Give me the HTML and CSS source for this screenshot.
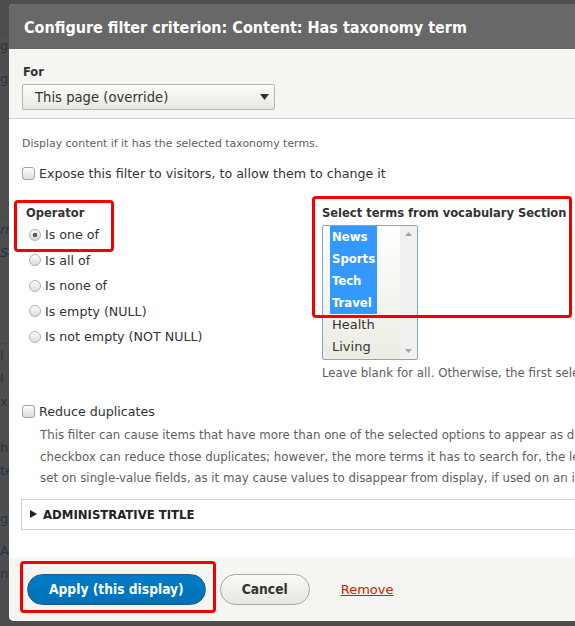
FILE: index.html
```html
<!DOCTYPE html>
<html lang="en">
<head>
<meta charset="utf-8">
<title>Configure filter criterion</title>
<link rel="stylesheet" href="styles.css">
</head>
<body>
<div class="backdrop" aria-hidden="true">
  <div class="bd-space bd-s34"></div>
  <div class="bd-row">ge</div>
  <div class="bd-space bd-s10"></div>
  <div class="bd-row">g</div>
  <div class="bd-space bd-s128"></div>
  <div class="bd-row bd-em">rr</div>
  <div class="bd-row bd-em">Sc</div>
  <div class="bd-space bd-s80"></div>
  <div class="bd-row">l c</div>
  <div class="bd-row">l E</div>
  <div class="bd-row">xt</div>
  <div class="bd-space bd-s23"></div>
  <div class="bd-row">hi</div>
  <div class="bd-row">te</div>
  <div class="bd-space bd-s25"></div>
  <div class="bd-row">g</div>
  <div class="bd-space bd-s9"></div>
  <div class="bd-row">Ar</div>
  <div class="bd-row">nc</div>
</div>

<div class="dialog" role="dialog" aria-labelledby="dlg-title">
  <div class="dialog-title" id="dlg-title">Configure filter criterion: Content: Has taxonomy term</div>

  <div class="override">
    <div class="field-label">For</div>
    <div class="select">
      <span>This page (override)</span>
      <svg class="select-arrow" width="9" height="6" viewBox="0 0 9 6"><path d="M0 0H9L4.5 6Z" fill="#333"/></svg>
    </div>
  </div>

  <div class="dialog-body">
    <p class="desc">Display content if it has the selected taxonomy terms.</p>
    <label class="check-row"><input type="checkbox" class="check"><span>Expose this filter to visitors, to allow them to change it</span></label>

    <div class="columns">
      <div class="col-left">
        <div class="field-label">Operator</div>
        <label class="radio-row"><input type="radio" name="op" class="radio" checked><span>Is one of</span></label>
        <label class="radio-row"><input type="radio" name="op" class="radio"><span>Is all of</span></label>
        <label class="radio-row"><input type="radio" name="op" class="radio"><span>Is none of</span></label>
        <label class="radio-row"><input type="radio" name="op" class="radio"><span>Is empty (NULL)</span></label>
        <label class="radio-row"><input type="radio" name="op" class="radio"><span>Is not empty (NOT NULL)</span></label>
      </div>
      <div class="col-right">
        <div class="field-label">Select terms from vocabulary Section</div>
        <div class="listbox" role="listbox" aria-multiselectable="true">
          <div class="options">
            <div class="opt selected" role="option" aria-selected="true">News</div>
            <div class="opt selected" role="option" aria-selected="true">Sports</div>
            <div class="opt selected" role="option" aria-selected="true">Tech</div>
            <div class="opt selected" role="option" aria-selected="true">Travel</div>
            <div class="opt" role="option">Health</div>
            <div class="opt" role="option">Living</div>
          </div>
          <div class="scrollbar">
            <svg width="7" height="4" viewBox="0 0 7 4"><path d="M3.5 0L7 4H0Z" fill="#a3a3a3"/></svg>
            <svg width="7" height="4" viewBox="0 0 7 4"><path d="M0 0H7L3.5 4Z" fill="#a3a3a3"/></svg>
          </div>
        </div>
        <p class="desc nowrap">Leave blank for all. Otherwise, the first selected term will be the default instead of "Any".</p>
      </div>
    </div>

    <label class="check-row reduce"><input type="checkbox" class="check"><span>Reduce duplicates</span></label>
    <p class="desc long-desc">This filter can cause items that have more than one of the selected options to appear as duplicate results. If this filter causes duplicate results to occur, this<br>checkbox can reduce those duplicates; however, the more terms it has to search for, the less performant the query will be, so use this with caution. Shouldn't be<br>set on single-value fields, as it may cause values to disappear from display, if used on an incompatible field.</p>

    <div class="details">
      <svg class="details-arrow" width="7" height="8" viewBox="0 0 7 8"><path d="M0 0L7 4L0 8Z" fill="#222"/></svg>
      <span>Administrative title</span>
    </div>
  </div>

  <div class="dialog-buttons">
    <button class="btn btn-primary" type="button">Apply (this display)</button>
    <button class="btn btn-default" type="button">Cancel</button>
    <a class="remove-link" href="#">Remove</a>
  </div>
</div>

<div class="annot annot-op"></div>
<div class="annot annot-terms"></div>
<div class="annot annot-apply"></div>
</body>
</html>
```

FILE: styles.css
```css
html, body {
  margin: 0;
  height: 100%;
  overflow: hidden;
}

body {
  position: relative;
  background: #4e4e4e;
  font-family: "DejaVu Sans", sans-serif;
  color: #333;
}

/* dimmed page behind the modal */
.backdrop {
  display: flex;
  flex-direction: column;
}
.bd-space {
  border-bottom: 1px solid #484848;
  box-sizing: border-box;
}
.bd-s34 { height: 34px; }
.bd-s10 { height: 10px; }
.bd-s128 { height: 128px; }
.bd-s80 { height: 80px; }
.bd-s23 { height: 23px; }
.bd-s25 { height: 25px; }
.bd-s9 { height: 9px; }
.bd-row {
  height: 23px;
  line-height: 23px;
  font-size: 13px;
  color: #1d3446;
  white-space: nowrap;
}
.bd-em { font-style: italic; }

/* dialog */
.dialog {
  position: absolute;
  left: 9px;
  top: 4px;
  width: 960px;
  background: #fff;
  border-radius: 5px;
  overflow: hidden;
}

.dialog-title {
  height: 45px;
  box-sizing: border-box;
  padding: 14px 0 0 15px;
  background: #686868;
  color: #fff;
  font-family: "DejaVu Sans Condensed", "DejaVu Sans", sans-serif;
  font-weight: bold;
  font-size: 16px;
  line-height: 20px;
  white-space: nowrap;
}

.field-label {
  font-family: "DejaVu Sans Condensed", "DejaVu Sans", sans-serif;
  font-weight: bold;
  font-size: 12.8px;
  line-height: 18px;
  color: #333;
  white-space: nowrap;
}

.override {
  background: #f5f5f2;
  padding: 14px 13px 8px;
  border-bottom: 1px solid #cfcfcb;
}
.override .field-label {
  margin-left: 1px;
  margin-bottom: 3px;
}

.select {
  width: 253px;
  height: 26px;
  box-sizing: border-box;
  border: 1px solid #b8b8b4;
  border-radius: 2px;
  background: linear-gradient(to bottom, #fcfcfa, #e8e8e3);
  display: flex;
  align-items: center;
  justify-content: space-between;
  padding: 0 5px 0 12px;
  font-size: 13.2px;
  color: #333;
}

.dialog-body {
  padding: 17px 0 28px 13px;
}

.desc {
  margin: 0;
  font-size: 10.9px;
  line-height: 16px;
  color: #5e5e5e;
}
.nowrap { white-space: nowrap; }

.check-row {
  display: flex;
  align-items: center;
  height: 18px;
  margin-top: 12px;
  font-size: 12.65px;
  color: #333;
  white-space: nowrap;
}

.check,
.radio {
  appearance: none;
  -webkit-appearance: none;
  margin: 0 4px 0 0;
  width: 13px;
  height: 13px;
  box-sizing: border-box;
  border: 1px solid #a4a4a4;
  background: linear-gradient(to bottom, #fdfdfd, #dcdcdc);
  flex: none;
}
.check { border-radius: 3px; }
.radio {
  width: 12px;
  height: 12px;
  border-radius: 50%;
  border-color: #b0b0b0;
}
.radio:checked {
  background: radial-gradient(circle, #5a5a5a 0 2px, transparent 2.6px), linear-gradient(to bottom, #fdfdfd, #d8d8d8);
}

.columns {
  display: grid;
  grid-template-columns: 300px 1fr;
  margin-top: 22px;
}
.col-left { padding-left: 4px; }

.radio-row {
  display: flex;
  align-items: center;
  height: 25.5px;
  padding-left: 3px;
  font-size: 12.65px;
  color: #333;
  white-space: nowrap;
}

.listbox {
  margin-top: 3px;
  width: 96px;
  height: 135px;
  box-sizing: border-box;
  border: 1px solid #82a4d6;
  border-radius: 2px;
  display: flex;
  overflow: hidden;
  background: linear-gradient(to bottom, #ffffff, #ecebe2);
}
.options {
  flex: 1;
  padding-left: 7px;
  display: grid;
  grid-auto-rows: 22px;
  justify-content: start;
  align-content: start;
}
.opt {
  padding: 0 2px;
  line-height: 22px;
  font-size: 13px;
  color: #333;
  white-space: nowrap;
}
.opt.selected {
  background: #3399ff;
  color: #fff;
  font-family: "DejaVu Sans Condensed", "DejaVu Sans", sans-serif;
  font-weight: bold;
}
.scrollbar {
  width: 17px;
  background: #f1f1f1;
  display: flex;
  flex-direction: column;
  align-items: center;
  justify-content: space-between;
  padding: 6px 0 6px;
}
.col-right .desc {
  margin-top: 5px;
  font-size: 11.8px;
}

.reduce { margin-top: 21px; }

.long-desc {
  margin-top: 5px;
  padding-left: 18px;
  font-size: 11.8px;
  line-height: 21.5px;
  white-space: nowrap;
}

.details {
  margin: 9px 20px 0 -1px;
  height: 31px;
  box-sizing: border-box;
  border: 1px solid #cfcfcb;
  display: flex;
  align-items: center;
  padding-left: 8px;
  font-family: "DejaVu Sans Condensed", "DejaVu Sans", sans-serif;
  font-weight: bold;
  font-size: 13px;
  color: #222;
  text-transform: uppercase;
}
.details-arrow { margin-right: 6px; }

.dialog-buttons {
  background: #f5f5f2;
  padding: 16px 0 16px 18px;
  display: flex;
  align-items: center;
}

.btn {
  height: 31px;
  box-sizing: border-box;
  border-radius: 20px;
  padding: 0 21px;
  font-family: "DejaVu Sans Condensed", "DejaVu Sans", sans-serif;
  font-weight: bold;
  font-size: 13.7px;
  cursor: pointer;
}
.btn-primary {
  background: linear-gradient(to bottom, #007bc6, #0071b8);
  border: 1px solid #1e5c90;
  color: #fff;
}
.btn-default {
  margin-left: 14px;
  background: linear-gradient(to bottom, #f9f9f7, #e7e7df);
  border: 1px solid #a6a6a6;
  color: #333;
}
.remove-link {
  margin-left: 31px;
  font-size: 13px;
  color: #c72100;
  text-decoration: underline;
}

/* red annotation frames */
.annot {
  position: absolute;
  box-sizing: border-box;
  border: 3px solid #f20000;
  border-radius: 4px;
}
.annot-op { left: 14px; top: 200px; width: 100px; height: 52px; }
.annot-terms { left: 312px; top: 196px; width: 260px; height: 122px; }
.annot-apply { left: 20px; top: 561px; width: 196px; height: 52px; }
```
